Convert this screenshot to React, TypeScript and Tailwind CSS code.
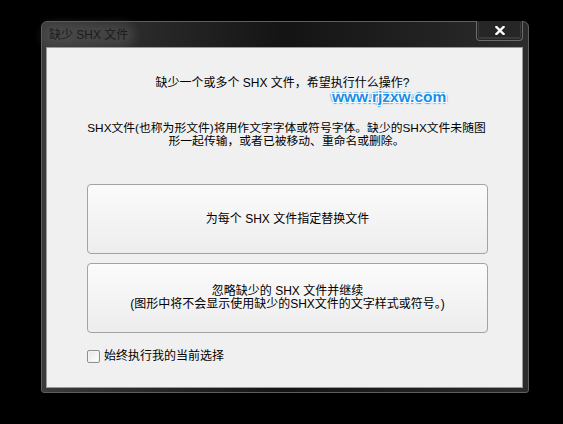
const FONT = { fontFamily: '"Liberation Sans", "Noto Sans CJK SC", sans-serif' }

function CloseGlyph() {
  return (
    <svg width="10" height="9" viewBox="0 0 10 9">
      <path d="M1.5 1 L8.5 8 M8.5 1 L1.5 8" stroke="#ffffff" strokeWidth="2.4" strokeLinecap="square" />
    </svg>
  )
}

export default function App() {
  return (
    <div className="w-[563px] h-[424px] bg-black overflow-hidden pt-[21px] pl-[41px]" style={FONT}>
      {/* Window */}
      <div className="w-[488px] h-[372px] flex flex-col border border-[#5e5e5e] rounded-t-[6px] rounded-b-[3px] bg-linear-to-r from-[#3b3b3b] via-[#141414] to-[#2c2c2c]">
        {/* Title bar */}
        <div className="h-[25px] flex items-start relative shrink-0">
          <span className="mt-[6px] ml-[5px] px-[2px] text-[12px] leading-[14px] text-[#1c1c1c] bg-[#5f5f5f]/40 rounded-full shadow-[0_0_9px_5px_rgba(95,95,95,0.4)]">
            缺少 SHX 文件
          </span>
          <div className="absolute -top-px right-[5px] w-[47px] h-[20px] border border-[#6c6c6c] border-t-0 rounded-b-[4px] shadow-[inset_0_0_0_1px_#242424,inset_0_-1px_0_2px_#3a3a3a] bg-[#262626] flex items-center justify-center pb-[1px]">
            <CloseGlyph />
          </div>
        </div>

        {/* Client area */}
        <div className="ml-[4px] mr-[5px] h-[341px] border border-[#9a9a9a] bg-[#f0f0f0] relative text-black text-[12px]">
          <div className="pt-[29px] text-center leading-[12px] ml-[-4px]">缺少一个或多个 SHX 文件，希望执行什么操作?</div>

          {/* watermark */}
          <div className="absolute left-[285px] top-[42px] text-[15.5px] font-bold leading-[13px] text-[#1a8de6] [text-shadow:1px_0_0_#fff,-1px_0_0_#fff,0_1px_0_#fff,0_-1px_0_#fff,1px_1px_0_#fff,-1px_-1px_0_#fff,1px_-1px_0_#fff,-1px_1px_0_#fff,2px_0_1px_#5ab0f0,-2px_0_1px_#5ab0f0,0_2px_1px_#5ab0f0,0_-2px_1px_#5ab0f0]">
            www.rjzxw.com
          </div>

          <div className="mt-[33px] text-center leading-[13px] ml-[4px] text-[11.8px]">
            SHX文件(也称为形文件)将用作文字字体或符号字体。缺少的SHX文件未随图
            <br />
            形一起传输，或者已被移动、重命名或删除。
          </div>

          <div className="mt-[36px] ml-[40px] w-[401px] flex flex-col gap-[9px]">
            <button className="h-[70px] border border-[#a3a3a3] rounded-[4px] bg-linear-to-b from-[#fbfbfb] to-[#ededed] text-[12px] leading-[13px] flex items-center justify-center">
              为每个 SHX 文件指定替换文件
            </button>
            <button className="h-[70px] border border-[#a3a3a3] rounded-[4px] bg-linear-to-b from-[#fbfbfb] to-[#ededed] text-[12px] leading-[12.6px] flex flex-col items-center justify-center">
              <span>忽略缺少的 SHX 文件并继续</span>
              <span>(图形中将不会显示使用缺少的SHX文件的文字样式或符号。)</span>
            </button>
          </div>

          <label className="mt-[16px] ml-[40px] flex items-center gap-[4px]">
            <span className="w-[13px] h-[13px] border border-[#8e8e8e] rounded-[2px] bg-linear-to-br from-[#e6e6e6] to-[#ffffff] shadow-[inset_0_0_0_1px_#f4f4f4]" />
            <span className="leading-[14px]">始终执行我的当前选择</span>
          </label>
        </div>
      </div>
    </div>
  )
}
